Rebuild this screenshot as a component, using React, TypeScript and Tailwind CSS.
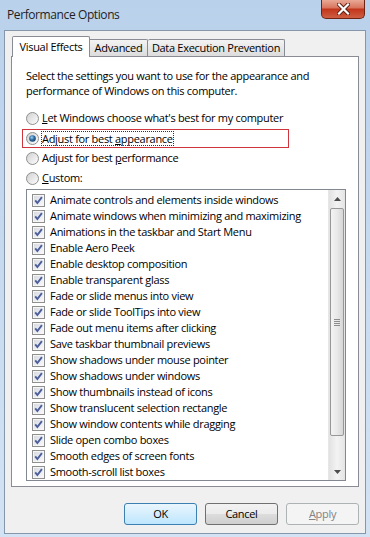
import React from 'react';

// Performance Options dialog (Windows 7 look)
const effects = [
  'Animate controls and elements inside windows',
  'Animate windows when minimizing and maximizing',
  'Animations in the taskbar and Start Menu',
  'Enable Aero Peek',
  'Enable desktop composition',
  'Enable transparent glass',
  'Fade or slide menus into view',
  'Fade or slide ToolTips into view',
  'Fade out menu items after clicking',
  'Save taskbar thumbnail previews',
  'Show shadows under mouse pointer',
  'Show shadows under windows',
  'Show thumbnails instead of icons',
  'Show translucent selection rectangle',
  'Show window contents while dragging',
  'Slide open combo boxes',
  'Smooth edges of screen fonts',
  'Smooth-scroll list boxes',
];

function Radio({ checked }: { checked?: boolean }) {
  return (
    <svg width="13" height="13" viewBox="0 0 13 13" className="shrink-0">
      <defs>
        <linearGradient id="radioFill" x1="0" y1="0" x2="1" y2="1">
          <stop offset="0" stopColor="#cfcfcf" />
          <stop offset="1" stopColor="#ffffff" />
        </linearGradient>
        <radialGradient id="radioDot" cx="0.4" cy="0.35" r="0.7">
          <stop offset="0" stopColor="#a9d4f2" />
          <stop offset="0.5" stopColor="#2f6ea3" />
          <stop offset="1" stopColor="#173e66" />
        </radialGradient>
      </defs>
      <circle cx="6.5" cy="6.5" r="6" fill="url(#radioFill)" stroke="#8e8f8f" />
      {checked && <circle cx="6.5" cy="6.5" r="3.3" fill="url(#radioDot)" />}
    </svg>
  );
}

function Check() {
  return (
    <svg width="13" height="13" viewBox="0 0 13 13" className="shrink-0">
      <defs>
        <linearGradient id="checkFill" x1="0" y1="0" x2="1" y2="1">
          <stop offset="0" stopColor="#d8dbe2" />
          <stop offset="1" stopColor="#f8f8fa" />
        </linearGradient>
      </defs>
      <rect x="0.5" y="0.5" width="12" height="12" fill="#f6f6f6" stroke="#8e8f8f" />
      <rect x="2" y="2" width="9" height="9" fill="url(#checkFill)" />
      <path d="M3.2 6.3 L5.4 9 L9.9 3.2" fill="none" stroke="#4b5d9c" strokeWidth="1.9" />
    </svg>
  );
}

function Arrow({ down }: { down?: boolean }) {
  return (
    <svg width="7" height="4" viewBox="0 0 7 4">
      <path d={down ? 'M0 0 H7 L3.5 4 Z' : 'M0 4 H7 L3.5 0 Z'} fill="#4d4d4d" />
    </svg>
  );
}

export default function App() {
  return (
    <div
      className="w-[370px] h-[537px] flex flex-col bg-gradient-to-b from-[#bad1eb] to-[#d3e3f4] text-black overflow-hidden"
      style={{ fontFamily: '"Segoe UI", "Open Sans", sans-serif' }}
    >
      {/* title bar */}
      <div className="h-[30px] flex justify-between items-start shrink-0">
        <div className="self-center pl-[7px] text-[12px] tracking-[-0.4px] text-[#1e1e1e]">Performance Options</div>
        <div className="mr-[5px] w-[44px] h-[19px] flex items-center justify-center rounded-b-[5px] border border-t-0 border-[#702313] bg-[linear-gradient(to_bottom,#e8a995_0%,#d97660_42%,#c2361b_52%,#cf5e43_100%)]">
          <svg width="13" height="12" viewBox="0 0 13 12">
            <path d="M2 1.5 L11 10.5 M11 1.5 L2 10.5" stroke="#5b1a0f" strokeWidth="4" strokeLinecap="square" />
            <path d="M2 1.5 L11 10.5 M11 1.5 L2 10.5" stroke="#ffffff" strokeWidth="2.2" strokeLinecap="square" />
          </svg>
        </div>
      </div>

      {/* client area */}
      <div className="flex-1 mx-[4px] mb-[3px] border border-[#8797ab] bg-[#f0f0f0] flex flex-col px-[6px] pt-[5px] text-[11px] tracking-[-0.3px]">
        {/* tabs */}
        <div className="flex items-end h-[21px] -mb-px relative z-10">
          <div className="ml-px w-[78px] h-[21px] flex items-center justify-center bg-white border border-b-0 border-[#898c95] rounded-t-[2px]">
            Visual Effects
          </div>
          <div className="w-[58px] h-[17px] mb-px flex items-center justify-center border-t border-r border-[#898c95] bg-gradient-to-b from-[#f3f3f3] to-[#dcdcdc] rounded-tr-[2px]">
            Advanced
          </div>
          <div className="w-[137px] h-[17px] mb-px flex items-center justify-center border-t border-r border-[#898c95] bg-gradient-to-b from-[#f3f3f3] to-[#dcdcdc] rounded-t-[2px]">
            Data Execution Prevention
          </div>
        </div>

        {/* tab page */}
        <div className="h-[431px] border border-[#898c95] bg-white pl-[14px] pt-[11px] flex flex-col">
          <p className="leading-[15px]">
            Select the settings you want to use for the appearance and
            <br />
            performance of Windows on this computer.
          </p>

          <div className="mt-[10px] flex flex-col">
            <div className="h-[20px] flex items-center gap-[3px]">
              <Radio />
              <span>
                <span className="underline">L</span>et Windows choose what's best for my computer
              </span>
            </div>
            <div className="h-[20px] flex items-center gap-[3px] relative">
              <Radio checked />
              <span className="outline outline-1 outline-dotted outline-[#333] leading-[13px]">
                Adjust for best <span className="underline">a</span>ppearance
              </span>
              <div className="absolute left-[-4px] top-px w-[267px] h-[19px] border border-[#d0343c]" />
            </div>
            <div className="h-[20px] flex items-center gap-[3px]">
              <Radio />
              <span>
                Adjust for best <span className="underline">p</span>erformance
              </span>
            </div>
            <div className="h-[20px] flex items-center gap-[3px]">
              <Radio />
              <span>
                <span className="underline">C</span>ustom:
              </span>
            </div>
          </div>

          {/* effects list */}
          <div className="mt-px w-[320px] h-[292px] border border-[#828790] bg-white flex overflow-hidden">
            <div className="flex-1 pt-[2px] pl-[5px] flex flex-col">
              {effects.map((label) => (
                <div key={label} className="h-[16px] shrink-0 flex items-center gap-[5px]">
                  <Check />
                  <span className="whitespace-nowrap">{label}</span>
                </div>
              ))}
            </div>
            <div className="w-[17px] flex flex-col bg-gradient-to-r from-[#e2e2e2] via-[#f3f3f3] to-[#e4e4e4] border-l border-[#e6e6e6]">
              <div className="h-[17px] flex items-center justify-center">
                <Arrow />
              </div>
              <div className="mt-px mx-px h-[228px] rounded-[2px] border border-[#979797] bg-gradient-to-r from-[#f3f3f3] via-[#e9e9e9] to-[#d6d6d6] flex items-center justify-center">
                <div className="flex flex-col gap-[1px]">
                  <div className="w-[6px] h-px bg-[#8c8c8c]" />
                  <div className="w-[6px] h-px bg-[#8c8c8c]" />
                  <div className="w-[6px] h-px bg-[#8c8c8c]" />
                  <div className="w-[6px] h-px bg-[#8c8c8c]" />
                </div>
              </div>
              <div className="flex-1" />
              <div className="h-[17px] flex items-center justify-center">
                <Arrow down />
              </div>
            </div>
          </div>
        </div>

        {/* buttons */}
        <div className="mt-[16px] flex justify-end gap-[8px]">
          <button className="w-[73px] h-[22px] rounded-[3px] border border-[#3c7fb1] bg-gradient-to-b from-[#eaf6fd] to-[#bee6fd]">
            OK
          </button>
          <button className="w-[73px] h-[22px] rounded-[3px] border border-[#707070] bg-[linear-gradient(to_bottom,#f2f2f2_0%,#ebebeb_50%,#dddddd_51%,#cfcfcf_100%)]">
            Cancel
          </button>
          <button className="w-[73px] h-[22px] rounded-[3px] border border-[#adb2b5] bg-[#f4f4f4] text-[#838383]">
            <span className="underline">A</span>pply
          </button>
        </div>
      </div>
    </div>
  );
}
